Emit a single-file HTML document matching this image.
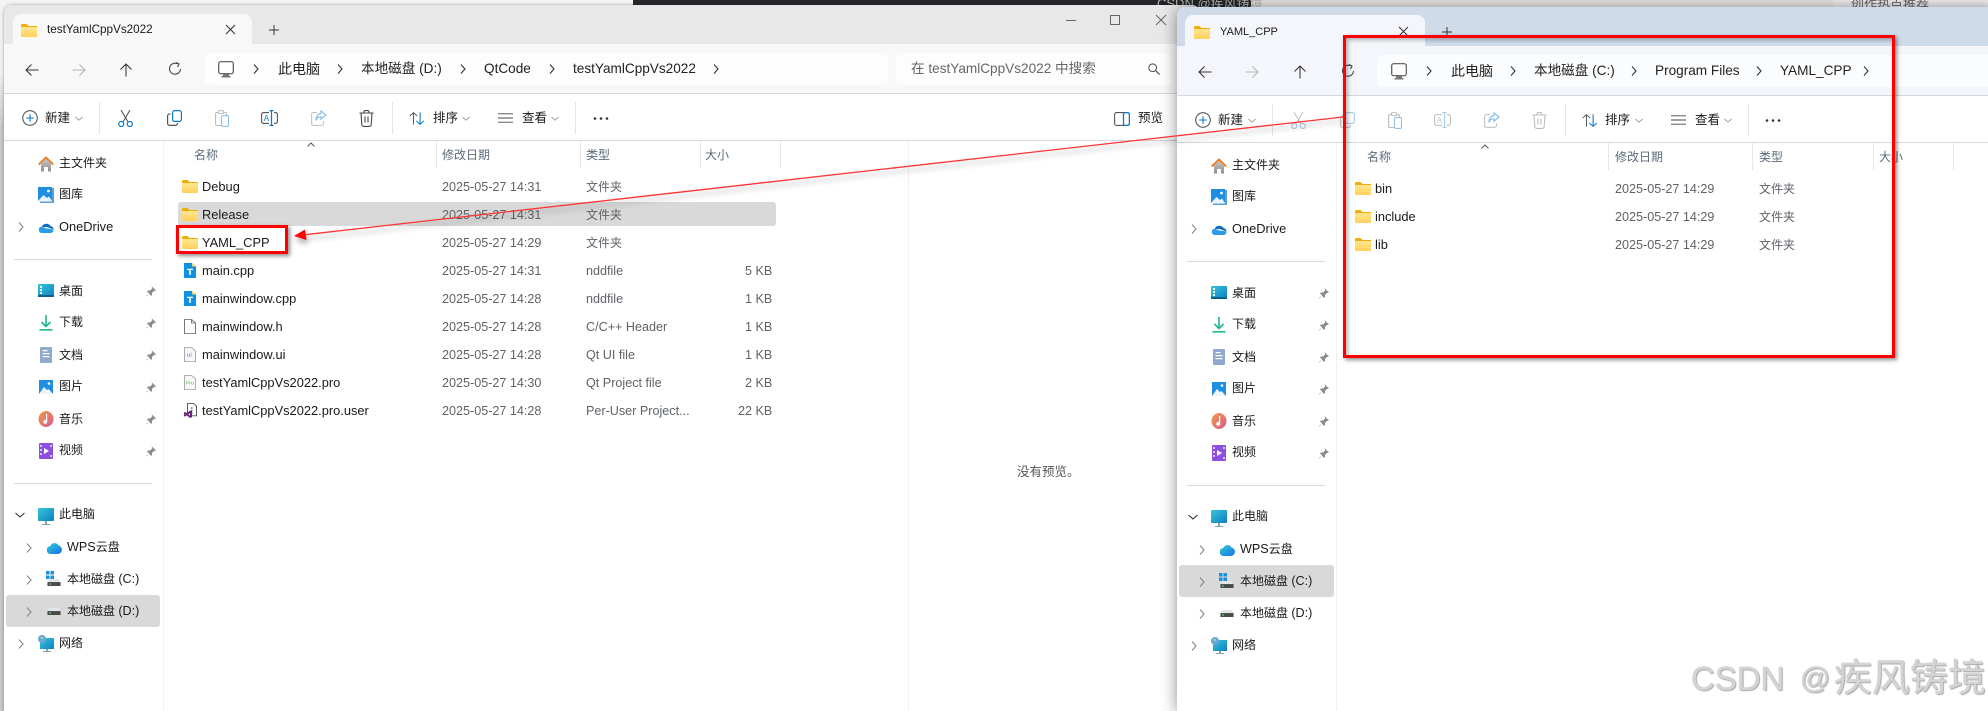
<!DOCTYPE html>
<html lang="zh"><head><meta charset="utf-8"><title>YAML_CPP</title>
<style>
html,body{margin:0;padding:0;background:#fff;width:1988px;height:711px;overflow:hidden}
#root{position:relative;width:1988px;height:711px;overflow:hidden;font:12px/20px "Liberation Sans","Noto Sans CJK SC",sans-serif;color:#1a1a1a}
.a{position:absolute}
b{position:absolute;font-weight:normal;white-space:nowrap;line-height:20px;font-size:12px}
b.l{font-size:12.6px}
b.l:not(.g){font-size:12.85px}
b i{font-style:normal;font-size:12.6px}
b.g{color:#5f6368}
b.h{color:#5d6b7a}
b.n{font-size:13.6px;color:#222}
b.w{font-size:33px;line-height:38px;color:#d4d4d4;text-shadow:0 0 1px #8a8a8a,1px 1px 1px #b0b0b0}
svg.i{position:absolute;overflow:visible}
.win{position:absolute;left:0;top:0;width:0;height:0}
.bg{position:absolute;left:4px;top:5px;height:706px;background:#fff;border-radius:8px 8px 0 0;box-shadow:0 0 10px rgba(0,0,0,.45)}
.s{position:absolute;width:1px;background:#e6e6e6}
.d{position:absolute;left:14px;width:138px;height:1px;background:#d9d9d9}
</style></head><body><div id="root">

<svg width="0" height="0" style="position:absolute"><defs>
<linearGradient id="fg" x1="0" y1="0" x2="0" y2="1"><stop offset="0" stop-color="#ffe68f"/><stop offset="1" stop-color="#ffd15c"/></linearGradient>
<linearGradient id="pg" x1="0" y1="0" x2="1" y2="1"><stop offset="0" stop-color="#35c6dc"/><stop offset="1" stop-color="#0f7fc0"/></linearGradient>
<linearGradient id="hg" x1="0" y1="0" x2="0" y2="1"><stop offset="0" stop-color="#c4c4c4"/><stop offset="1" stop-color="#8f8f8f"/></linearGradient>
<linearGradient id="mg" x1="0" y1="0" x2="1" y2="1"><stop offset="0" stop-color="#ef9a4a"/><stop offset="1" stop-color="#d95c8c"/></linearGradient>
<linearGradient id="wg" x1="0" y1="0" x2="1" y2="1"><stop offset="0" stop-color="#2dd0d0"/><stop offset="1" stop-color="#1a6fe8"/></linearGradient>
<symbol id="fo" viewBox="0 0 16 13"><path fill="#f2ab0c" d="M0 1.5A1.5 1.5 0 0 1 1.5 0h4L7.5 2H16v3H0z"/><rect y="3" width="16" height="10" rx="1" fill="url(#fg)"/></symbol>
<symbol id="home" viewBox="0 0 16 16"><path fill="url(#hg)" d="M3 8l5-5 5 5v7.500H10V11H6v4.500H3z"/><path fill="none" stroke="#e8802a" stroke-width="2" d="M.8 8.500L8 1.500l7.200 7"/></symbol>
<symbol id="gal" viewBox="0 0 16 16"><path fill="#5a9fdc" d="M14 1h2v15H2v-1.500h12z"/><path fill="#1e8fe0" d="M0 0h14v14H0z"/><path fill="#eaf4fc" d="M0 14l5.500-6L9 11l2-1.500L14 14z"/><circle cx="10.500" cy="4" r="1.400" fill="#fff"/></symbol>
<symbol id="one" viewBox="0 0 16 11"><path fill="#0f6cc0" d="M3.500 5.500A5 5 0 0 1 12.500 4 3.500 3.500 0 0 1 15.500 7.500L9 5z"/><path fill="#2b9be8" d="M3.500 11A3.200 3.200 0 0 1 3 4.800L6 6l9.500 1.500A3.200 3.200 0 0 1 13 11z"/></symbol>
<symbol id="desk" viewBox="0 0 16 16"><rect y="1" width="16" height="13" rx="1" fill="url(#pg)"/><path fill="#0d5f8e" d="M0 12h16v2H0z"/><path fill="#fff" d="M2 3h2v2H2zM2 6h2v2H2zM2 9h2v2H2z"/></symbol>
<symbol id="dl" viewBox="0 0 16 16"><path fill="none" stroke="#1fb58f" stroke-width="1.600" d="M8 0v11M3.500 7L8 11.500 12.500 7"/><path fill="#1fb58f" d="M1.500 14h13v1.600h-13z"/></symbol>
<symbol id="doc" viewBox="0 0 16 16"><rect x="2" width="12" height="16" rx="1" fill="#8ea9cc"/><path fill="#fff" d="M4.500 3h5v1.200h-5zM4.500 6h7v1.200h-7zM4.500 9h7v1.200h-7z"/></symbol>
<symbol id="pic" viewBox="0 0 14 14"><rect width="14" height="14" fill="#1e8fe0"/><path fill="#eef6fc" d="M0 14l5-7 3 3 1.500-1 4.500 5z"/><circle cx="10" cy="3.500" r="1.300" fill="#fff"/></symbol>
<symbol id="mus" viewBox="0 0 16 16"><ellipse cx="8" cy="8" rx="7.500" ry="8" fill="url(#mg)"/><path fill="#fff" d="M8 3h1.200v7.500A2 2 0 1 1 8 9z"/></symbol>
<symbol id="vid" viewBox="0 0 14 16"><rect width="14" height="16" rx="1" fill="#8c4fe0"/><path fill="#fff" d="M5 5l5 3-5 3z"/><path fill="#d8c2f6" d="M1 2h2v2H1zM1 6h2v2H1zM1 10h2v2H1zM11 2h2v2h-2zM11 12h2v2h-2z"/></symbol>
<symbol id="pc" viewBox="0 0 16 18"><rect width="16" height="13" rx="1" fill="url(#pg)"/><path fill="#8aa3b3" d="M7 13h2v3h3v1H4v-1h3z"/></symbol>
<symbol id="wps" viewBox="0 0 15 13"><path fill="url(#wg)" d="M4 13A4 4 0 0 1 3.300 5 4.500 4.500 0 0 1 11.500 4.500 4.300 4.300 0 0 1 11 13z"/></symbol>
<symbol id="drv" viewBox="0 0 15 8"><path fill="#e2e6e9" d="M2 0h11l2 4H0z"/><rect y="3.500" width="15" height="4.500" fill="#4a4a4a"/><rect x="2" y="5" width="2" height="1.500" fill="#4be04b"/></symbol>
<symbol id="win" viewBox="0 0 9 9"><path fill="#1e8fe0" d="M0 0h4v4H0zM5 0h4v4H5zM0 5h4v4H0zM5 5h4v4H5z"/></symbol>
<symbol id="net" viewBox="0 0 16 18"><rect x="2" y="3" width="14" height="11" fill="url(#pg)"/><path fill="#8aa3b3" d="M8 14h2v2h3v1H5v-1h3z"/><circle cx="4" cy="4" r="4" fill="#6aa7d8"/><path fill="#9fd19a" d="M2 2h3v2H3z"/></symbol>
<symbol id="pin" viewBox="0 0 10 11"><path fill="#8b8b8b" d="M5.500 0L10 4.500 8.800 5 8 4.800 6 7v2L5 10 3 7.500 .5 10.500 0 10l3-2.500L1 5.500 2 4.500h2l2.200-2L6 1.500z"/></symbol>
<symbol id="cr" viewBox="0 0 6 10"><path fill="none" stroke="currentColor" stroke-width="1.100" d="M1 .5l4 4.500-4 4.500"/></symbol>
<symbol id="cd" viewBox="0 0 10 6"><path fill="none" stroke="currentColor" stroke-width="1.100" d="M.5 1l4.500 4 4.500-4"/></symbol>
<symbol id="tf" viewBox="0 0 12 17" preserveAspectRatio="none"><path fill="#1192e0" d="M0 0h8l4 4v13H0z"/><path fill="#f5d76a" d="M8 0l4 4H8z"/><path fill="#fff" d="M3 6.500h6V8H6.800v5.500H5.200V8H3z"/></symbol>
<symbol id="fh" viewBox="0 0 12 17" preserveAspectRatio="none"><path fill="#fff" stroke="#777" d="M.5.500h7l4 4v12H.5z"/><path fill="none" stroke="#777" d="M7.500.5v4h4"/></symbol>
<symbol id="fu" viewBox="0 0 12 17" preserveAspectRatio="none"><path fill="#f8f6fa" stroke="#aaa" d="M.5.500h7l4 4v12H.5z"/><text x="3" y="11" font-size="6" fill="#5a7f9c" font-family="Liberation Sans">ui</text></symbol>
<symbol id="fp" viewBox="0 0 12 17" preserveAspectRatio="none"><path fill="#f8f8f6" stroke="#aaa" d="M.5.500h7l4 4v12H.5z"/><text x="1.500" y="11" font-size="5.500" fill="#62b05a" font-family="Liberation Sans">Pro</text></symbol>
<symbol id="fv" viewBox="0 0 13 17" preserveAspectRatio="none"><path fill="#fff" stroke="#555" d="M3.500.5h6l3 3v11h-9z"/><path fill="#555" d="M7 5h1.500v1.500H7zM7 8h1.500v1.500H7zM7 11h1.500v1.500H7z"/><path fill="#68217a" d="M0 11l1-1 2 1.500L6 8.500 8 9.500v6.500l-2 1-3-3-2 1.500-1-1zM1.500 13v1l1-.5zM6 11.500L4.300 13 6 14.500z"/></symbol>
<symbol id="back" viewBox="0 0 14 14"><path fill="none" stroke="currentColor" stroke-width="1.050" d="M13.500 7H1M6.500 1.500L1 7l5.500 5.500"/></symbol>
<symbol id="fwd" viewBox="0 0 14 14"><path fill="none" stroke="currentColor" stroke-width="1.050" d="M.5 7H13M7.500 1.500L13 7l-5.500 5.500"/></symbol>
<symbol id="up" viewBox="0 0 14 14"><path fill="none" stroke="currentColor" stroke-width="1.050" d="M7 13.500V1M1.500 6.500L7 1l5.500 5.500"/></symbol>
<symbol id="ref" viewBox="0 0 14 14"><path fill="none" stroke="#444" stroke-width="1.050" d="M9.500 1.800A5.500 5.500 0 1 0 12.500 7"/><path fill="none" stroke="#444" stroke-width="1.050" d="M8 .5L11 2 9.500 5"/></symbol>
<symbol id="mon" viewBox="0 0 16 18"><rect x=".7" y=".7" width="14.600" height="12" rx="2" fill="#fff" stroke="#555" stroke-width="1.200"/><path fill="#777" d="M5 13h6v2H5zM3.500 15h9v1.500h-9z"/></symbol>
<symbol id="srch" viewBox="0 0 14 14"><circle cx="5.500" cy="5.500" r="4.500" fill="none" stroke="#444" stroke-width="1.100"/><path stroke="#444" stroke-width="1.300" d="M9 9l4.500 4.500"/></symbol>
<symbol id="new" viewBox="0 0 16 16"><circle cx="8" cy="8" r="7.300" fill="none" stroke="#555" stroke-width="1.100"/><path stroke="#0b78c9" stroke-width="1.100" d="M8 4.200v7.600M4.200 8h7.600"/></symbol>
<symbol id="cut" viewBox="0 0 15 17"><path fill="none" stroke="#555" stroke-width="1.100" d="M3 0l7 12M12 0L5 12"/><circle cx="3.200" cy="14" r="2.500" fill="none" stroke="#0b78c9" stroke-width="1.200"/><circle cx="11.800" cy="14" r="2.500" fill="none" stroke="#0b78c9" stroke-width="1.200"/></symbol>
<symbol id="cpy" viewBox="0 0 15 16"><rect x="5.600" y=".6" width="8.800" height="10.800" rx="2" fill="#fff" stroke="#0b78c9" stroke-width="1.200"/><path fill="none" stroke="#555" stroke-width="1.200" d="M3.500 4H2.600a2 2 0 0 0-2 2v7.400a2 2 0 0 0 2 2h5.800a2 2 0 0 0 2-2V13"/></symbol>
<symbol id="pst" viewBox="0 0 14 17"><path fill="none" stroke="#bbb" stroke-width="1.100" d="M7 15.500H2A1.500 1.500 0 0 1 .6 14V4A1.500 1.500 0 0 1 2 2.500h8A1.500 1.500 0 0 1 11.500 4v1"/><rect x="3.500" y=".6" width="5" height="3" rx="1" fill="#fff" stroke="#bbb"/><rect x="6.500" y="5.600" width="7" height="10.800" rx="1.500" fill="#fff" stroke="#8cc0ea" stroke-width="1.100"/></symbol>
<symbol id="ren" viewBox="0 0 17 16"><path fill="none" stroke="#555" stroke-width="1.100" d="M8 2.600H2.500A2 2 0 0 0 .6 4.500v7a2 2 0 0 0 1.900 1.900H8M13 2.600h1.500a2 2 0 0 1 1.900 1.900v7a2 2 0 0 1-1.900 1.900H13"/><path fill="none" stroke="#0b78c9" stroke-width="1.200" d="M8.500.6h4M8.500 15.400h4M10.500.6v14.800"/><text x="2.700" y="11" font-size="8" fill="#0b78c9" font-family="Liberation Sans">A</text></symbol>
<symbol id="shr" viewBox="0 0 16 16"><path fill="none" stroke="#c4c4c4" stroke-width="1.100" d="M6 2.600H2.500A2 2 0 0 0 .6 4.500v9a2 2 0 0 0 1.900 1.900h8a2 2 0 0 0 2-2V11"/><path fill="none" stroke="#8cc0ea" stroke-width="1.200" d="M10 .8l5 4.200-5 4.200V6.800C7 6.800 5.500 8.500 5 10.500 5 6.500 7 3.800 10 3.500z"/></symbol>
<symbol id="del" viewBox="0 0 15 17"><path fill="none" stroke="#444" stroke-width="1.100" d="M.5 3h14M5 3V1.800A1.200 1.200 0 0 1 6.200.6h2.600A1.200 1.200 0 0 1 10 1.800V3M2 3l.8 11.500a2 2 0 0 0 2 1.900h5.400a2 2 0 0 0 2-1.900L13 3M6 6.500v6M9 6.500v6"/></symbol>
<symbol id="srt" viewBox="0 0 18 16" preserveAspectRatio="none"><path fill="none" stroke="#555" stroke-width="1.100" d="M5 15.500V1M.8 5L5 .8 9.200 5"/><path fill="none" stroke="#0b78c9" stroke-width="1.200" d="M12.500.5V15M8.300 11l4.200 4.200L16.700 11"/></symbol>
<symbol id="vw" viewBox="0 0 16 12" preserveAspectRatio="none"><path stroke="#444" stroke-width="1.100" d="M0 1h16M0 6h16M0 11h16"/></symbol>
<symbol id="prv" viewBox="0 0 16 14"><rect x=".6" y=".6" width="14.800" height="12.800" rx="2" fill="none" stroke="#555" stroke-width="1.100"/><path fill="none" stroke="#0b78c9" stroke-width="1.300" d="M9.500.6h4a2 2 0 0 1 2 2v8.800a2 2 0 0 1-2 2h-4z"/></symbol>
</defs></svg>

<!-- strips behind the windows -->
<div class="a" style="left:0;top:0;width:633px;height:10px;background:#f4f4f4"></div>
<div class="a" style="left:633px;top:0;width:618px;height:10px;background:#25272b"></div>
<div class="a" style="left:1251px;top:0;width:582px;height:10px;background:#efecE8"></div>
<div class="a" style="left:1833px;top:0;width:155px;height:10px;background:#f4f4f6"></div>
<b style="left:1157px;top:-6px;color:#bbb;font-size:13px">CSDN @疾风铸境</b>
<b style="left:1851px;top:-5px;color:#666;font-size:13px">创作热点推荐</b>
<div class="a" style="left:0;top:10px;width:4px;height:701px;background:linear-gradient(#f2f2f2 0,#f2f2f2 60px,#c8c8c8 120px,#c8c8c8 100%)"></div>

<!-- LEFT WINDOW -->
<div class="win">
<div class="bg" style="width:1196px;box-shadow:0 0 3px rgba(0,0,0,.35)"></div>
<div class="a" style="left:4px;top:5px;width:1196px;height:39px;background:#e8e8e8;border-radius:8px 8px 0 0"></div>
<div class="a" style="left:13px;top:14px;width:239px;height:30px;background:#f8f8f8;border-radius:8px 8px 0 0"></div>
<div class="a" style="left:4px;top:44px;width:1196px;height:49px;background:#f8f8f8;border-bottom:1px solid #d8d8d8"></div>
<div class="a" style="left:205px;top:53px;width:683px;height:32px;background:#fdfdfd;border-radius:5px"></div>
<div class="a" style="left:896px;top:53px;width:275px;height:32px;background:#fdfdfd;border-radius:5px"></div>
<div class="a" style="left:4px;top:140px;width:1196px;height:1px;background:#d8d8d8"></div>
<div class="a" style="left:163px;top:141px;width:1px;height:570px;background:#f1f1f1"></div>
<div class="a" style="left:908px;top:141px;width:1px;height:570px;background:#f1f1f1"></div>

<svg class="i" style="left:21px;top:24px;width:16px;height:13px"><use href="#fo"/></svg>
<b style="left:47px;top:20px;font-size:11.700px">testYamlCppVs2022</b>
<svg class="i" style="left:226px;top:25px;width:9px;height:9px"><path d="M0 0l9 9M9 0L0 9" stroke="#333"/></svg>
<svg class="i" style="left:269px;top:25px;width:10px;height:10px"><path d="M5 0v10M0 5h10" stroke="#333"/></svg>
<svg class="i" style="left:1066px;top:20px;width:10px;height:1px"><path d="M0 .5h10" stroke="#666"/></svg>
<svg class="i" style="left:1110px;top:15px;width:10px;height:10px"><rect x=".5" y=".5" width="9" height="9" fill="none" stroke="#666"/></svg>
<svg class="i" style="left:1156px;top:15px;width:10px;height:10px"><path d="M0 0l10 10M10 0L0 10" stroke="#666"/></svg>

<svg class="i" style="left:25px;top:63px;width:14px;height:14px;color:#333"><use href="#back"/></svg>
<svg class="i" style="left:72px;top:63px;width:14px;height:14px;color:#b5b5b5"><use href="#fwd"/></svg>
<svg class="i" style="left:119px;top:63px;width:14px;height:14px;color:#333"><use href="#up"/></svg>
<svg class="i" style="left:168px;top:62px;width:14px;height:14px"><use href="#ref"/></svg>
<svg class="i" style="left:218px;top:61px;width:16px;height:18px"><use href="#mon"/></svg>
<svg class="i" style="left:253px;top:64px;width:6px;height:10px;color:#333"><use href="#cr"/></svg>
<b class="n" style="left:278px;top:59px;font-size:14px">此电脑</b>
<svg class="i" style="left:337px;top:64px;width:6px;height:10px;color:#333"><use href="#cr"/></svg>
<b class="n" style="left:361px;top:59px">本地磁盘 (D:)</b>
<svg class="i" style="left:460px;top:64px;width:6px;height:10px;color:#333"><use href="#cr"/></svg>
<b class="n" style="left:484px;top:59px">QtCode</b>
<svg class="i" style="left:549px;top:64px;width:6px;height:10px;color:#333"><use href="#cr"/></svg>
<b class="n" style="left:573px;top:59px">testYamlCppVs2022</b>
<svg class="i" style="left:713px;top:64px;width:6px;height:10px;color:#333"><use href="#cr"/></svg>
<b class="n" style="left:911px;top:59px;color:#666">在 testYamlCppVs2022 中搜索</b>
<svg class="i" style="left:1148px;top:63px;width:12px;height:12px"><use href="#srch"/></svg>

<svg class="i" style="left:22px;top:110px;width:16px;height:16px"><use href="#new"/></svg>
<b style="left:45px;top:108px;font-size:12.500px">新建</b>
<svg class="i" style="left:75px;top:116px;width:8px;height:5px;color:#999"><use href="#cd"/></svg>
<div class="s" style="left:99px;top:102px;height:32px"></div>
<svg class="i" style="left:118px;top:110px;width:15px;height:17px"><use href="#cut"/></svg>
<svg class="i" style="left:167px;top:110px;width:15px;height:16px"><use href="#cpy"/></svg>
<svg class="i" style="left:215px;top:110px;width:14px;height:17px"><use href="#pst"/></svg>
<svg class="i" style="left:261px;top:110px;width:17px;height:16px"><use href="#ren"/></svg>
<svg class="i" style="left:311px;top:110px;width:16px;height:16px"><use href="#shr"/></svg>
<svg class="i" style="left:359px;top:110px;width:15px;height:17px"><use href="#del"/></svg>
<div class="s" style="left:392px;top:102px;height:32px"></div>
<svg class="i" style="left:409px;top:112px;width:16px;height:13px"><use href="#srt"/></svg>
<b style="left:433px;top:108px;font-size:12.500px">排序</b>
<svg class="i" style="left:462px;top:116px;width:8px;height:5px;color:#999"><use href="#cd"/></svg>
<svg class="i" style="left:498px;top:113px;width:15px;height:10px"><use href="#vw"/></svg>
<b style="left:522px;top:108px;font-size:12.500px">查看</b>
<svg class="i" style="left:551px;top:116px;width:8px;height:5px;color:#999"><use href="#cd"/></svg>
<div class="s" style="left:575px;top:102px;height:32px"></div>
<svg class="i" style="left:593px;top:117px;width:16px;height:3px"><circle cx="2" cy="1.500" r="1.300" fill="#333"/><circle cx="8" cy="1.500" r="1.300" fill="#333"/><circle cx="14" cy="1.500" r="1.300" fill="#333"/></svg>
<svg class="i" style="left:1114px;top:112px;width:16px;height:14px"><use href="#prv"/></svg>
<b style="left:1138px;top:108px;font-size:12.500px">预览</b>

<svg class="i" style="left:307px;top:142px;width:8px;height:5px;color:#555"><path d="M.5 4.500L4 1l3.500 3.500" fill="none" stroke="currentColor"/></svg>
<b class="h" style="left:194px;top:145px">名称</b>
<div class="s" style="left:436px;top:141px;height:27px"></div>
<b class="h" style="left:442px;top:145px">修改日期</b>
<div class="s" style="left:580px;top:141px;height:27px"></div>
<b class="h" style="left:586px;top:145px">类型</b>
<div class="s" style="left:700px;top:141px;height:27px"></div>
<b class="h" style="left:705px;top:145px">大小</b>
<div class="s" style="left:780px;top:141px;height:27px"></div>

<div class="a" style="left:178px;top:202px;width:598px;height:24px;background:#d9d9d9;border-radius:3px"></div>
<svg class="i" style="left:182px;top:180px;width:16px;height:13px"><use href="#fo"/></svg>
<b class="l" style="left:202px;top:177px">Debug</b><b class="l g" style="left:442px;top:177px">2025-05-27 14:31</b><b class="g" style="left:586px;top:177px">文件夹</b>
<svg class="i" style="left:182px;top:208px;width:16px;height:13px"><use href="#fo"/></svg>
<b class="l" style="left:202px;top:205px">Release</b><b class="l g" style="left:442px;top:205px">2025-05-27 14:31</b><b class="g" style="left:586px;top:205px">文件夹</b>
<svg class="i" style="left:182px;top:236px;width:16px;height:13px"><use href="#fo"/></svg>
<b class="l" style="left:202px;top:233px">YAML_CPP</b><b class="l g" style="left:442px;top:233px">2025-05-27 14:29</b><b class="g" style="left:586px;top:233px">文件夹</b>
<svg class="i" style="left:184px;top:263px;width:12px;height:15px"><use href="#tf"/></svg>
<b class="l" style="left:202px;top:261px">main.cpp</b><b class="l g" style="left:442px;top:261px">2025-05-27 14:31</b><b class="l g" style="left:586px;top:261px">nddfile</b><b class="l g" style="left:745px;top:261px">5 KB</b>
<svg class="i" style="left:184px;top:291px;width:12px;height:15px"><use href="#tf"/></svg>
<b class="l" style="left:202px;top:289px">mainwindow.cpp</b><b class="l g" style="left:442px;top:289px">2025-05-27 14:28</b><b class="l g" style="left:586px;top:289px">nddfile</b><b class="l g" style="left:745px;top:289px">1 KB</b>
<svg class="i" style="left:184px;top:319px;width:12px;height:15px"><use href="#fh"/></svg>
<b class="l" style="left:202px;top:317px">mainwindow.h</b><b class="l g" style="left:442px;top:317px">2025-05-27 14:28</b><b class="l g" style="left:586px;top:317px">C/C++ Header</b><b class="l g" style="left:745px;top:317px">1 KB</b>
<svg class="i" style="left:184px;top:347px;width:12px;height:15px"><use href="#fu"/></svg>
<b class="l" style="left:202px;top:345px">mainwindow.ui</b><b class="l g" style="left:442px;top:345px">2025-05-27 14:28</b><b class="l g" style="left:586px;top:345px">Qt UI file</b><b class="l g" style="left:745px;top:345px">1 KB</b>
<svg class="i" style="left:184px;top:375px;width:12px;height:15px"><use href="#fp"/></svg>
<b class="l" style="left:202px;top:373px">testYamlCppVs2022.pro</b><b class="l g" style="left:442px;top:373px">2025-05-27 14:30</b><b class="l g" style="left:586px;top:373px">Qt Project file</b><b class="l g" style="left:745px;top:373px">2 KB</b>
<svg class="i" style="left:184px;top:403px;width:13px;height:15px"><use href="#fv"/></svg>
<b class="l" style="left:202px;top:401px">testYamlCppVs2022.pro.user</b><b class="l g" style="left:442px;top:401px">2025-05-27 14:28</b><b class="l g" style="left:586px;top:401px">Per-User Project...</b><b class="l g" style="left:738px;top:401px">22 KB</b>
<b style="left:1017px;top:462px;color:#555;font-size:12.500px">没有预览。</b>

<svg class="i" style="left:38px;top:156px;width:16px;height:16px"><use href="#home"/></svg><b style="left:59px;top:153px">主文件夹</b>
<svg class="i" style="left:38px;top:187px;width:16px;height:16px"><use href="#gal"/></svg><b style="left:59px;top:184px">图库</b>
<svg class="i" style="left:18px;top:222px;width:6px;height:10px;color:#888"><use href="#cr"/></svg>
<svg class="i" style="left:38px;top:222px;width:16px;height:11px"><use href="#one"/></svg><b class="l" style="left:59px;top:217px">OneDrive</b>
<div class="d" style="top:259px"></div>
<svg class="i" style="left:38px;top:283px;width:16px;height:16px"><use href="#desk"/></svg><b style="left:59px;top:281px">桌面</b><svg class="i" style="left:146px;top:286px;width:10px;height:11px"><use href="#pin"/></svg>
<svg class="i" style="left:38px;top:315px;width:16px;height:16px"><use href="#dl"/></svg><b style="left:59px;top:312px">下载</b><svg class="i" style="left:146px;top:318px;width:10px;height:11px"><use href="#pin"/></svg>
<svg class="i" style="left:38px;top:347px;width:16px;height:16px"><use href="#doc"/></svg><b style="left:59px;top:345px">文档</b><svg class="i" style="left:146px;top:350px;width:10px;height:11px"><use href="#pin"/></svg>
<svg class="i" style="left:39px;top:380px;width:14px;height:14px"><use href="#pic"/></svg><b style="left:59px;top:376px">图片</b><svg class="i" style="left:146px;top:382px;width:10px;height:11px"><use href="#pin"/></svg>
<svg class="i" style="left:38px;top:411px;width:16px;height:16px"><use href="#mus"/></svg><b style="left:59px;top:409px">音乐</b><svg class="i" style="left:146px;top:414px;width:10px;height:11px"><use href="#pin"/></svg>
<svg class="i" style="left:39px;top:443px;width:14px;height:16px"><use href="#vid"/></svg><b style="left:59px;top:440px">视频</b><svg class="i" style="left:146px;top:446px;width:10px;height:11px"><use href="#pin"/></svg>
<div class="d" style="top:483px"></div>
<svg class="i" style="left:15px;top:512px;width:10px;height:6px;color:#333"><use href="#cd"/></svg>
<svg class="i" style="left:38px;top:508px;width:16px;height:18px"><use href="#pc"/></svg><b style="left:59px;top:504px">此电脑</b>
<svg class="i" style="left:26px;top:543px;width:6px;height:10px;color:#888"><use href="#cr"/></svg>
<svg class="i" style="left:47px;top:541px;width:15px;height:13px"><use href="#wps"/></svg><b style="left:67px;top:537px"><i>WPS</i>云盘</b>
<svg class="i" style="left:46px;top:571px;width:8px;height:8px"><use href="#win"/></svg>
<svg class="i" style="left:47px;top:579px;width:14px;height:7px"><use href="#drv"/></svg>
<svg class="i" style="left:26px;top:575px;width:6px;height:10px;color:#888"><use href="#cr"/></svg><b style="left:67px;top:569px">本地磁盘 <i>(C:)</i></b>
<div class="a" style="left:6px;top:595px;width:154px;height:32px;background:#d9d9d9;border-radius:3px"></div>
<svg class="i" style="left:26px;top:607px;width:6px;height:10px;color:#888"><use href="#cr"/></svg>
<svg class="i" style="left:47px;top:608px;width:14px;height:7px"><use href="#drv"/></svg><b style="left:67px;top:601px">本地磁盘 <i>(D:)</i></b>
<svg class="i" style="left:18px;top:639px;width:6px;height:10px;color:#888"><use href="#cr"/></svg>
<svg class="i" style="left:38px;top:635px;width:16px;height:18px"><use href="#net"/></svg><b style="left:59px;top:633px">网络</b>
</div>

<!-- RIGHT WINDOW (dx 1173, dy 2) -->
<div class="win" style="left:1173px;top:2px">
<div class="bg" style="width:820px;box-shadow:0 0 16px rgba(0,0,0,.45)"></div>
<div class="a" style="left:4px;top:5px;width:820px;height:39px;background:#d0dbe9;border-radius:8px 8px 0 0"></div>
<div class="a" style="left:12px;top:13px;width:240px;height:31px;background:#f4f6fb;border-radius:8px 8px 0 0"></div>
<div class="a" style="left:4px;top:44px;width:820px;height:49px;background:#f4f6fb;border-bottom:1px solid #d4d8e0"></div>
<div class="a" style="left:204px;top:53px;width:620px;height:32px;background:#fbfcfe;border-radius:5px"></div>
<div class="a" style="left:4px;top:140px;width:820px;height:1px;background:#d4d8e0"></div>
<div class="a" style="left:163px;top:141px;width:1px;height:570px;background:#f1f1f1"></div>

<svg class="i" style="left:21px;top:24px;width:16px;height:13px"><use href="#fo"/></svg>
<b style="left:47px;top:20px;font-size:11px">YAML_CPP</b>
<svg class="i" style="left:226px;top:25px;width:9px;height:9px"><path d="M0 0l9 9M9 0L0 9" stroke="#333"/></svg>
<svg class="i" style="left:269px;top:25px;width:10px;height:10px"><path d="M5 0v10M0 5h10" stroke="#333"/></svg>

<svg class="i" style="left:25px;top:63px;width:14px;height:14px;color:#333"><use href="#back"/></svg>
<svg class="i" style="left:72px;top:63px;width:14px;height:14px;color:#b5b5b5"><use href="#fwd"/></svg>
<svg class="i" style="left:120px;top:63px;width:14px;height:14px;color:#333"><use href="#up"/></svg>
<svg class="i" style="left:168px;top:62px;width:14px;height:14px"><use href="#ref"/></svg>
<svg class="i" style="left:218px;top:61px;width:16px;height:18px"><use href="#mon"/></svg>
<svg class="i" style="left:253px;top:64px;width:6px;height:10px;color:#333"><use href="#cr"/></svg>
<b class="n" style="left:278px;top:59px;font-size:14px">此电脑</b>
<svg class="i" style="left:337px;top:64px;width:6px;height:10px;color:#333"><use href="#cr"/></svg>
<b class="n" style="left:361px;top:59px">本地磁盘 (C:)</b>
<svg class="i" style="left:458px;top:64px;width:6px;height:10px;color:#333"><use href="#cr"/></svg>
<b class="n" style="left:482px;top:59px">Program Files</b>
<svg class="i" style="left:583px;top:64px;width:6px;height:10px;color:#333"><use href="#cr"/></svg>
<b class="n" style="left:607px;top:59px">YAML_CPP</b>
<svg class="i" style="left:690px;top:64px;width:6px;height:10px;color:#333"><use href="#cr"/></svg>

<svg class="i" style="left:22px;top:110px;width:16px;height:16px"><use href="#new"/></svg>
<b style="left:45px;top:108px;font-size:12.500px">新建</b>
<svg class="i" style="left:75px;top:116px;width:8px;height:5px;color:#999"><use href="#cd"/></svg>
<div class="s" style="left:99px;top:102px;height:32px"></div>
<svg class="i" style="left:118px;top:110px;width:15px;height:17px;opacity:.35"><use href="#cut"/></svg>
<svg class="i" style="left:167px;top:110px;width:15px;height:16px;opacity:.35"><use href="#cpy"/></svg>
<svg class="i" style="left:215px;top:110px;width:14px;height:17px"><use href="#pst"/></svg>
<svg class="i" style="left:261px;top:110px;width:17px;height:16px;opacity:.35"><use href="#ren"/></svg>
<svg class="i" style="left:311px;top:110px;width:16px;height:16px"><use href="#shr"/></svg>
<svg class="i" style="left:359px;top:110px;width:15px;height:17px;opacity:.35"><use href="#del"/></svg>
<div class="s" style="left:392px;top:102px;height:32px"></div>
<svg class="i" style="left:409px;top:112px;width:16px;height:13px"><use href="#srt"/></svg>
<b style="left:432px;top:108px;font-size:12.500px">排序</b>
<svg class="i" style="left:462px;top:116px;width:8px;height:5px;color:#999"><use href="#cd"/></svg>
<svg class="i" style="left:498px;top:113px;width:15px;height:10px"><use href="#vw"/></svg>
<b style="left:522px;top:108px;font-size:12.500px">查看</b>
<svg class="i" style="left:551px;top:116px;width:8px;height:5px;color:#999"><use href="#cd"/></svg>
<div class="s" style="left:575px;top:102px;height:32px"></div>
<svg class="i" style="left:592px;top:117px;width:16px;height:3px"><circle cx="2" cy="1.500" r="1.300" fill="#333"/><circle cx="8" cy="1.500" r="1.300" fill="#333"/><circle cx="14" cy="1.500" r="1.300" fill="#333"/></svg>

<svg class="i" style="left:308px;top:142px;width:8px;height:5px;color:#555"><path d="M.5 4.500L4 1l3.500 3.500" fill="none" stroke="currentColor"/></svg>
<b class="h" style="left:194px;top:145px">名称</b>
<div class="s" style="left:435px;top:141px;height:27px"></div>
<b class="h" style="left:442px;top:145px">修改日期</b>
<div class="s" style="left:579px;top:141px;height:27px"></div>
<b class="h" style="left:586px;top:145px">类型</b>
<div class="s" style="left:700px;top:141px;height:27px"></div>
<b class="h" style="left:706px;top:145px">大小</b>
<div class="s" style="left:780px;top:141px;height:27px"></div>

<svg class="i" style="left:182px;top:180px;width:16px;height:13px"><use href="#fo"/></svg>
<b class="l" style="left:202px;top:177px">bin</b><b class="l g" style="left:442px;top:177px">2025-05-27 14:29</b><b class="g" style="left:586px;top:177px">文件夹</b>
<svg class="i" style="left:182px;top:208px;width:16px;height:13px"><use href="#fo"/></svg>
<b class="l" style="left:202px;top:205px">include</b><b class="l g" style="left:442px;top:205px">2025-05-27 14:29</b><b class="g" style="left:586px;top:205px">文件夹</b>
<svg class="i" style="left:182px;top:236px;width:16px;height:13px"><use href="#fo"/></svg>
<b class="l" style="left:202px;top:233px">lib</b><b class="l g" style="left:442px;top:233px">2025-05-27 14:29</b><b class="g" style="left:586px;top:233px">文件夹</b>

<svg class="i" style="left:38px;top:156px;width:16px;height:16px"><use href="#home"/></svg><b style="left:59px;top:153px">主文件夹</b>
<svg class="i" style="left:38px;top:187px;width:16px;height:16px"><use href="#gal"/></svg><b style="left:59px;top:184px">图库</b>
<svg class="i" style="left:18px;top:222px;width:6px;height:10px;color:#888"><use href="#cr"/></svg>
<svg class="i" style="left:38px;top:222px;width:16px;height:11px"><use href="#one"/></svg><b class="l" style="left:59px;top:217px">OneDrive</b>
<div class="d" style="top:259px"></div>
<svg class="i" style="left:38px;top:283px;width:16px;height:16px"><use href="#desk"/></svg><b style="left:59px;top:281px">桌面</b><svg class="i" style="left:146px;top:286px;width:10px;height:11px"><use href="#pin"/></svg>
<svg class="i" style="left:38px;top:315px;width:16px;height:16px"><use href="#dl"/></svg><b style="left:59px;top:312px">下载</b><svg class="i" style="left:146px;top:318px;width:10px;height:11px"><use href="#pin"/></svg>
<svg class="i" style="left:38px;top:347px;width:16px;height:16px"><use href="#doc"/></svg><b style="left:59px;top:345px">文档</b><svg class="i" style="left:146px;top:350px;width:10px;height:11px"><use href="#pin"/></svg>
<svg class="i" style="left:39px;top:380px;width:14px;height:14px"><use href="#pic"/></svg><b style="left:59px;top:376px">图片</b><svg class="i" style="left:146px;top:382px;width:10px;height:11px"><use href="#pin"/></svg>
<svg class="i" style="left:38px;top:411px;width:16px;height:16px"><use href="#mus"/></svg><b style="left:59px;top:409px">音乐</b><svg class="i" style="left:146px;top:414px;width:10px;height:11px"><use href="#pin"/></svg>
<svg class="i" style="left:39px;top:443px;width:14px;height:16px"><use href="#vid"/></svg><b style="left:59px;top:440px">视频</b><svg class="i" style="left:146px;top:446px;width:10px;height:11px"><use href="#pin"/></svg>
<div class="d" style="top:483px"></div>
<svg class="i" style="left:15px;top:512px;width:10px;height:6px;color:#333"><use href="#cd"/></svg>
<svg class="i" style="left:38px;top:508px;width:16px;height:18px"><use href="#pc"/></svg><b style="left:59px;top:504px">此电脑</b>
<svg class="i" style="left:26px;top:543px;width:6px;height:10px;color:#888"><use href="#cr"/></svg>
<svg class="i" style="left:47px;top:541px;width:15px;height:13px"><use href="#wps"/></svg><b style="left:67px;top:537px"><i>WPS</i>云盘</b>
<div class="a" style="left:6px;top:563px;width:155px;height:32px;background:#d9d9d9;border-radius:3px"></div>
<svg class="i" style="left:46px;top:571px;width:8px;height:8px"><use href="#win"/></svg>
<svg class="i" style="left:47px;top:579px;width:14px;height:7px"><use href="#drv"/></svg>
<svg class="i" style="left:26px;top:575px;width:6px;height:10px;color:#888"><use href="#cr"/></svg><b style="left:67px;top:569px">本地磁盘 <i>(C:)</i></b>
<svg class="i" style="left:26px;top:607px;width:6px;height:10px;color:#888"><use href="#cr"/></svg>
<svg class="i" style="left:47px;top:608px;width:14px;height:7px"><use href="#drv"/></svg><b style="left:67px;top:601px">本地磁盘 <i>(D:)</i></b>
<svg class="i" style="left:18px;top:639px;width:6px;height:10px;color:#888"><use href="#cr"/></svg>
<svg class="i" style="left:38px;top:635px;width:16px;height:18px"><use href="#net"/></svg><b style="left:59px;top:633px">网络</b>
</div>

<!-- annotations -->
<div class="a" style="left:176px;top:225px;width:106px;height:23px;border:3px solid #f00;box-shadow:2px 2px 4px rgba(0,0,0,.45)"></div>
<div class="a" style="left:1343px;top:35px;width:546px;height:317px;border:3px solid #f00;box-shadow:2px 2px 4px rgba(0,0,0,.45),inset 2px 2px 4px rgba(0,0,0,.3)"></div>
<svg class="a" style="left:0;top:0;filter:drop-shadow(1px 4px 3px rgba(0,0,0,.35))" width="1988" height="711">
<line x1="1343" y1="117" x2="304" y2="234.800" stroke="#f33" stroke-width="1.300"/>
<path d="M294 236L305 229.500 306.500 240z" fill="#f00"/>
</svg>

<!-- watermark -->
<b class="w" style="left:1691px;top:660px">CSDN</b>
<b class="w" style="left:1800px;top:660px;font-size:30px">@</b>
<b class="w" style="left:1834px;top:660px;font-size:38px">疾风铸境</b>
</div></body></html>
